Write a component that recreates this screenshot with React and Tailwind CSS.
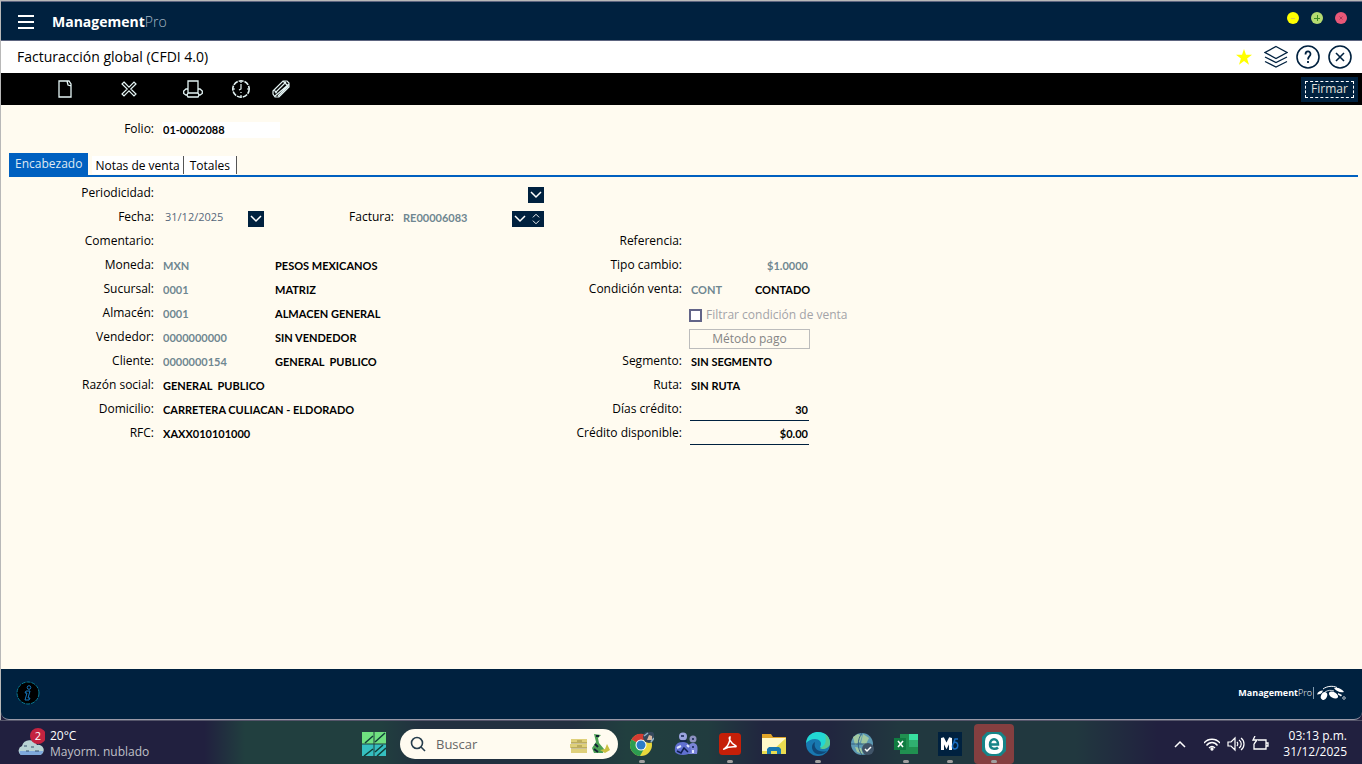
const label = "font-['Open_Sans',sans-serif] text-[12px] leading-4 text-black";
const value = "min-w-0 bg-transparent font-['Lato',sans-serif] text-[11px] font-bold leading-4 text-black outline-none";
const code = "min-w-0 bg-transparent font-['Lato',sans-serif] text-[11px] font-bold leading-4 text-[#6f8791] outline-none";

function Chevron({ up = false, className = "h-2 w-3" }) {
  return (
    <svg viewBox="0 0 12 8" className={className} fill="none" stroke="currentColor" strokeWidth="1.5">
      <path d={up ? "M1 7l5-5 5 5" : "M1 1l5 5 5-5"} />
    </svg>
  );
}

function TitleBar() {
  return (
    <header className="flex h-10 items-center border-b border-t border-[#5d6580] bg-[#00213f] pl-[17px] pr-[15px] pt-0.5 text-white">
      <button aria-label="Menú" className="mr-[18px] h-6 w-4">
        <svg viewBox="0 0 16 24" className="h-6 w-4" fill="none" stroke="white" strokeWidth="2">
          <path d="M0 6h16M0 12h16M0 18h16" />
        </svg>
      </button>
      <h1 className="font-['Open_Sans',sans-serif] text-[14px] font-bold leading-5 text-white">
        Management<span className="font-light text-[#a7b8c4]">Pro</span>
      </h1>
      <div className="ml-auto flex gap-3 pb-2">
        <button aria-label="Minimizar" className="h-3 w-3 rounded-full bg-[#ffff00]">
          <svg viewBox="0 0 12 12" stroke="#e0c850"><path d="M4 6.500h4" /></svg>
        </button>
        <button aria-label="Maximizar" className="h-3 w-3 rounded-full bg-[#b5db70]">
          <svg viewBox="0 0 12 12" stroke="#3f8a20"><path d="M3 6.500h6M6.500 3v6" /></svg>
        </button>
        <button aria-label="Cerrar" className="h-3 w-3 rounded-full bg-[#e85878]">
          <svg viewBox="0 0 12 12" stroke="#a83858"><path d="M4.500 4.500l3 3M7.500 4.500l-3 3" /></svg>
        </button>
      </div>
    </header>
  );
}

function PageBar() {
  return (
    <div className="flex h-8 items-center bg-white pl-4 pr-[10px] text-[#00213f]">
      <h2 className="font-['Open_Sans',sans-serif] text-[14px] leading-5 text-black">Facturacción global (CFDI 4.0)</h2>
      <div className="ml-auto flex items-center gap-2">
        <button aria-label="Favorito" className="mr-1 h-4 w-4">
          <svg viewBox="0 0 16 16" fill="#ffff00"><path d="M8 0l2 5.800h6l-4.900 3.700 1.900 6.200L8 12l-5 3.700 1.900-6.200L0 5.800h6z" /></svg>
        </button>
        <button aria-label="Ventanas" className="h-6 w-6">
          <svg viewBox="0 0 24 24" fill="none" stroke="currentColor" strokeWidth="1.300">
            <path d="M12 1.500l11 6-11 6-11-6zM1 12l11 5.500L23 12M1 16.500L12 22l11-5.500" />
          </svg>
        </button>
        <button aria-label="Ayuda" className="h-6 w-6">
          <svg viewBox="0 0 24 24" fill="none" stroke="currentColor" strokeWidth="1.600">
            <circle cx="12" cy="12" r="11" />
            <path d="M9.500 9.500c0-4 5-4 5-.5 0 2.500-2.500 2.500-2.500 5.500M12 16v2" strokeWidth="1.800" />
          </svg>
        </button>
        <button aria-label="Cerrar ventana" className="h-6 w-6">
          <svg viewBox="0 0 24 24" fill="none" stroke="currentColor" strokeWidth="1.600">
            <circle cx="12" cy="12" r="11" />
            <path d="M8 8l8 8M16 8l-8 8" />
          </svg>
        </button>
      </div>
    </div>
  );
}

function Toolbar() {
  const tool = "h-5 w-5 text-[#e4f4f4]";
  return (
    <div role="toolbar" className="flex h-8 items-center bg-black pl-[54px]">
      <button aria-label="Nuevo" className={tool}>
        <svg viewBox="0 0 20 20" fill="none" stroke="currentColor" strokeWidth="1.300">
          <path d="M12 2H4v16h12V7M12 2l1 4 3 1M12 2l2 0 2 3v2" />
        </svg>
      </button>
      <button aria-label="Cancelar" className={"ml-11 " + tool}>
        <svg viewBox="0 0 20 20" fill="none" stroke="currentColor" strokeWidth="1.200">
          <path d="M5 3l5 5.200L15 3l2 2-5.200 5 5.200 5-2 2-5-5.200L5 17l-2-2 5.200-5L3 5z" />
        </svg>
      </button>
      <button aria-label="Imprimir" className={"ml-11 " + tool}>
        <svg viewBox="0 0 20 20" fill="none" stroke="currentColor" strokeWidth="1.300">
          <path d="M5 14V2h10v12M5 10H3l-2.300 2v2.500L3 16h1M15 10h2l2.300 2v2.500L17 16h-1M5 14l-1 2 1 2h10l1-2-1-2z" />
        </svg>
      </button>
      <button aria-label="Historial" className={"ml-7 " + tool}>
        <svg viewBox="0 0 20 20" fill="none" stroke="currentColor" strokeWidth="1.600">
          <circle cx="10" cy="10" r="8.200" strokeDasharray="5 1" />
          <path d="M10 5v5l-2 1M10 13v1M10 2v2M10 16v2M2 10h2M16 10h2" strokeWidth="1.200" />
        </svg>
      </button>
      <button aria-label="Adjuntar" className={"ml-5 " + tool}>
        <svg viewBox="0 0 20 20" fill="none" stroke="currentColor" strokeWidth="1.200">
          <path d="M2 12L12 2h4l2 2v4L8 18H4l-2-3zM4 14L15 3M4 17L18 5M7 17L17 7M3 11l3 3M12 2l5 5" />
        </svg>
      </button>
      <div className="ml-auto mr-1 h-[25px] bg-[#00213f] p-1">
        <button className="flex h-[17px] w-[49px] items-center justify-center border border-dashed border-white font-['Open_Sans',sans-serif] text-[12px] leading-4 text-[#e0e0dc]">
          Firmar
        </button>
      </div>
    </div>
  );
}

function Row({ id, text, children }) {
  return (
    <div className="flex h-6 gap-2">
      <label htmlFor={id} className={"w-[154px] shrink-0 pr-px pt-1 text-right " + label}>{text}</label>
      <div className="flex min-w-0 flex-1 items-start pt-[5px]">{children}</div>
    </div>
  );
}

function CodeRow({ id, text, codeValue, description }) {
  return (
    <Row id={id} text={text}>
      <input id={id} defaultValue={codeValue} className={"w-28 " + code} />
      <output htmlFor={id} className={"whitespace-pre " + value}>{description}</output>
    </Row>
  );
}

function RightRow({ id, text, children }) {
  return (
    <div className="flex h-6 gap-2">
      <label htmlFor={id} className={"w-[138px] shrink-0 pt-1 text-right " + label}>{text}</label>
      <div className="flex min-w-0 flex-1 items-start pt-[5px]">{children}</div>
    </div>
  );
}

const dark = "mt-px flex h-4 w-4 items-center justify-center bg-[#00213f] text-white";
const amount = "h-[19px] w-[119px] border-b border-[#00213f] pb-[3px] pr-px text-right " + value;

function Form() {
  return (
    <div className="flex items-start pt-1">
      <section className="w-[543px] shrink-0">
        <Row id="periodicidad" text="Periodicidad:">
          <div className="relative flex-1">
            <select id="periodicidad" className="block h-4 w-full appearance-none bg-transparent pr-5 text-[11px]">
              <option></option>
            </select>
            <span className={"pointer-events-none absolute right-0 top-0 " + dark}><Chevron /></span>
          </div>
        </Row>
        <Row id="fecha" text="Fecha:">
          <input id="fecha" defaultValue="31/12/2025" className="-mt-px w-[85px] bg-transparent pl-0.5 font-['Open_Sans',sans-serif] text-[11px] leading-4 text-[#56677a] outline-none" />
          <button aria-label="Elegir fecha" className={dark}><Chevron /></button>
          <label htmlFor="factura" className={"-mt-px w-[130px] text-right " + label}>Factura:</label>
          <input id="factura" defaultValue="RE00006083" className={"ml-2 flex-1 pl-px " + code} />
          <button aria-label="Elegir factura" className={dark}><Chevron /></button>
          <div className="mt-px flex h-4 w-4 flex-col items-center justify-center gap-0.5 bg-[#00213f] text-white">
            <button aria-label="Factura siguiente"><Chevron up className="h-[5px] w-2" /></button>
            <button aria-label="Factura anterior"><Chevron className="h-[5px] w-2" /></button>
          </div>
        </Row>
        <Row id="comentario" text="Comentario:">
          <input id="comentario" className={"flex-1 " + value} />
        </Row>
        <CodeRow id="moneda" text="Moneda:" codeValue="MXN" description="PESOS MEXICANOS" />
        <CodeRow id="sucursal" text="Sucursal:" codeValue="0001" description="MATRIZ" />
        <CodeRow id="almacen" text="Almacén:" codeValue="0001" description="ALMACEN GENERAL" />
        <CodeRow id="vendedor" text="Vendedor:" codeValue="0000000000" description="SIN VENDEDOR" />
        <CodeRow id="cliente" text="Cliente:" codeValue="0000000154" description="GENERAL  PUBLICO" />
        <Row id="razon" text="Razón social:">
          <input id="razon" defaultValue="GENERAL  PUBLICO" className={"flex-1 " + value} />
        </Row>
        <Row id="domicilio" text="Domicilio:">
          <input id="domicilio" defaultValue="CARRETERA CULIACAN - ELDORADO" className={"flex-1 " + value} />
        </Row>
        <Row id="rfc" text="RFC:">
          <input id="rfc" defaultValue="XAXX010101000" className={"flex-1 " + value} />
        </Row>
      </section>
      <section className="min-w-[320px] flex-1 pt-12">
        <RightRow id="referencia" text="Referencia:">
          <input id="referencia" className={"w-[119px] " + value} />
        </RightRow>
        <RightRow id="tipo" text="Tipo cambio:">
          <input id="tipo" defaultValue="$1.0000" className={"w-[119px] pr-px text-right " + code} />
        </RightRow>
        <RightRow id="condicion" text="Condición venta:">
          <input id="condicion" defaultValue="CONT" className={"w-[65px] pl-px " + code} />
          <output htmlFor="condicion" className={value}>CONTADO</output>
        </RightRow>
        <div className="flex h-6 items-center pl-[145px] pt-1">
          <input id="filtrar" type="checkbox" className="h-[13px] w-[13px] appearance-none border-2 border-[#626488] bg-white" />
          <label htmlFor="filtrar" className="pl-1 font-['Open_Sans',sans-serif] text-[12px] leading-4 text-[#a3a3a8]">Filtrar condición de venta</label>
        </div>
        <div className="h-6 pl-[145px] pt-1">
          <button className="flex h-5 w-[121px] items-center justify-center border border-[#bcbcbc] font-['Open_Sans',sans-serif] text-[12px] leading-4 text-[#858585]">Método pago</button>
        </div>
        <RightRow id="segmento" text="Segmento:">
          <output id="segmento" className={"pl-px " + value}>SIN SEGMENTO</output>
        </RightRow>
        <RightRow id="ruta" text="Ruta:">
          <output id="ruta" className={"pl-px " + value}>SIN RUTA</output>
        </RightRow>
        <RightRow id="dias" text="Días crédito:">
          <input id="dias" defaultValue="30" className={amount} />
        </RightRow>
        <RightRow id="credito" text="Crédito disponible:">
          <input id="credito" defaultValue="$0.00" className={amount} />
        </RightRow>
      </section>
    </div>
  );
}

function Main() {
  const tab = "h-[18px] border-r border-[#555] bg-white pt-0.5 font-['Open_Sans',sans-serif] text-[12px] leading-4 text-black";
  return (
    <main className="flex-1 bg-[#fffbf0]">
      <div className="flex gap-2 pt-4">
        <label htmlFor="folio" className={"w-[153px] text-right " + label}>Folio:</label>
        <input id="folio" defaultValue="01-0002088" className="mt-px h-4 w-[118px] bg-white pl-px font-['Lato',sans-serif] text-[11px] font-bold leading-4 text-black outline-none" />
      </div>
      <div role="tablist" className="ml-2 mr-1 mt-[15px] flex h-6 items-end border-b-2 border-[#0060c0]">
        <button role="tab" aria-selected="true" className="mr-1 h-[22px] bg-[#0060c0] px-1.5 font-['Open_Sans',sans-serif] text-[12px] leading-4 text-[#dfe9f3]">Encabezado</button>
        <button role="tab" aria-selected="false" className={"mb-px px-[3px] " + tab}>Notas de venta</button>
        <button role="tab" aria-selected="false" className={"mb-px px-1.5 " + tab}>Totales</button>
      </div>
      <Form />
    </main>
  );
}

function Footer() {
  return (
    <footer className="flex h-[51px] items-center rounded-b-lg border-b border-[#9a9aa8] bg-[#00213f] pb-0.5 pl-[15px] pr-4">
      <button aria-label="Información" className="h-6 w-6">
        <svg viewBox="0 0 24 24">
          <circle cx="12" cy="12" r="11" fill="#000" stroke="#087a94" strokeDasharray="4 1" />
          <circle cx="13" cy="6.500" r="1.800" fill="none" stroke="#1678c0" />
          <path d="M10 10h4l-2 7h2l-1 2h-4l2-7H9z" fill="none" stroke="#1678c0" />
        </svg>
      </button>
      <div className="ml-auto flex items-center gap-0.5">
        <p className="border-r border-[#7f9ab0] pr-px font-['Open_Sans',sans-serif] text-[9px] font-bold leading-3 text-white">
          Management<span className="font-light">Pro</span>
        </p>
        <svg viewBox="0 0 30 16" className="h-4 w-[30px]" fill="white">
          <path d="M1 9.500c1-3 3-4 6-4-1 3-3 4-6 4z" />
          <path d="M7 4c4-3 10-3.500 14-1.500" fill="none" stroke="white" />
          <path d="M9 7c3-2 6-2 9-1" fill="none" stroke="white" strokeWidth=".8" />
          <path d="M18 3c4-1 8 1 10 4-4 1-8-1-10-4z" />
          <ellipse cx="8" cy="11" rx="3" ry="4" transform="rotate(25 8 11)" />
          <ellipse cx="17.500" cy="10" rx="5" ry="3" transform="rotate(30 17.500 10)" />
          <path d="M22 8l4 2-1 1.500-3-2z" />
          <circle cx="28" cy="13" r="1.300" fill="none" stroke="white" strokeWidth=".7" />
        </svg>
      </div>
    </footer>
  );
}

function AppIcon({ name, active = false, running = true, children }) {
  return (
    <button aria-label={name} className={"flex h-10 w-10 flex-col items-center rounded pt-2 " + (active ? "bg-[#843f40]" : "")}>
      <svg viewBox="0 0 24 24" className="h-6 w-6 shrink-0">{children}</svg>
      <span className={"mt-1 h-[3px] w-1.5 shrink-0 rounded-full " + (running ? "bg-[#a0a0a0]" : "")} />
    </button>
  );
}

function Taskbar() {
  return (
    <nav aria-label="Barra de tareas" className="flex h-11 items-center border-t border-[#55556a] bg-[linear-gradient(90deg,#21203f_15%,#213f3f_18%,#213f3f_28%,#21303f_31%,#21303f_42%,#213f3f_46%,#213c3f_52%,#21263f_56%,#21263f_61%,#21383f_66%,#21383f_79%,#21203f_85%)] pt-0.5 text-white">
      <div className="flex flex-1 items-center pl-[17px]">
        <svg viewBox="0 0 28 32" className="h-8 w-7">
          <path d="M4 27a5 5 0 0 1 1-9 8 8 0 0 1 15-1 5 5 0 0 1 3 10z" fill="#b9d4d4" />
          <path d="M4 27a3 3 0 0 1-1-4h23a4 4 0 0 1-3 4z" fill="#7fa9dc" />
          <path d="M7 18h3M14 19h3M9 23h3M18 23h4" stroke="#34506a" />
          <circle cx="21" cy="8" r="8" fill="#c42340" />
          <text x="21" y="12" textAnchor="middle" fill="white" fontSize="11" fontFamily="Open Sans, sans-serif">2</text>
        </svg>
        <p className="pl-[5px] font-['Open_Sans',sans-serif] text-[12px] leading-4 text-white">
          20°C<br /><span className="text-[#c0c0c8]">Mayorm. nublado</span>
        </p>
      </div>
      <div className="ml-3 flex shrink-0 items-center gap-1">
        <button aria-label="Inicio" className="mr-2.5 h-6 w-6">
          <svg viewBox="0 0 24 24">
            <path d="M0 0h11.500v11.500H0zM12.500 0H24v11.500H12.500z" fill="#6fe080" />
            <path d="M0 12.500h11.500V24H0zM12.500 12.500H24V24H12.500z" fill="#35bfc0" />
            <path d="M3 11L11 4M13 10L23 1M13 20l8-7M15 24l9-8M2 24l9-7" stroke="#104038" strokeWidth="1.500" />
          </svg>
        </button>
        <label className="flex h-[30px] w-[218px] items-center rounded-full bg-[#fffbf0] pl-2.5 pr-2">
          <svg viewBox="0 0 16 16" className="h-4 w-4" fill="none" stroke="#263d4c" strokeWidth="1.600">
            <circle cx="7" cy="7" r="5.500" /><path d="M11 11l4 4" />
          </svg>
          <input aria-label="Buscar" placeholder="Buscar" className="min-w-0 flex-1 bg-transparent pl-2.5 font-['Open_Sans',sans-serif] text-[13px] leading-5 outline-none placeholder:text-[#666]" />
          <svg viewBox="0 0 40 22" className="h-[22px] w-10">
            <path d="M1 6h16v4H1zM0 11h17v4H0zM1 16h16v4H1z" fill="#dfd07a" />
            <path d="M1 10h16M1 15h16M7 8h5M7 13h5" stroke="#9a8a40" />
            <path d="M24 1l7 1-3 3 1 5 5 6-1 4H24l-2-5 4-6z" fill="#4ca054" />
            <path d="M26 3h3M25 11l3 3M24 16l4 3" stroke="#123" strokeWidth="2" />
            <path d="M30 17l5-1 2-5 3 6-5 3z" fill="#c9c040" />
          </svg>
        </label>
        <AppIcon name="Chrome">
          <circle cx="11" cy="13" r="11" fill="#e8d83c" />
          <path d="M11 13L1.500 7.500A11 11 0 0 1 21 8H11z" fill="#d43c32" />
          <path d="M11 13L1.500 7.500A11 11 0 0 0 10 24l5-9z" fill="#2c9c50" />
          <circle cx="11" cy="13" r="5.500" fill="white" /><circle cx="11" cy="13" r="4.500" fill="#2a7cc8" />
          <circle cx="19" cy="5" r="6" fill="#34485c" />
          <path d="M17 8l2-5 3 1v4z" fill="#d8b8a0" /><path d="M14 4l4-3M21 10l3-4" stroke="#8fb4c8" strokeWidth="1.500" />
        </AppIcon>
        <AppIcon name="Usuarios" running={false}>
          <circle cx="9" cy="4.500" r="4" fill="#9aa4e0" /><circle cx="19" cy="7" r="3.500" fill="#8c90c0" />
          <path d="M14 22c-1-6 0-11 5-11s5 5 4 11z" fill="#7a84d8" />
          <path d="M1 20c-1-7 2-10 8-10 5 0 8 4 8 10-3 4-13 4-16 0z" fill="#6070d0" />
          <path d="M3 19l4 2 3-5 4 4M7 4h3M18 7h2M18 15h2M6 9h7" stroke="#102050" strokeWidth="1.500" fill="none" />
          <path d="M3 16l4-2M13 13l2 2M19 18v3" stroke="#dfe6ff" strokeWidth="2" />
        </AppIcon>
        <AppIcon name="Acrobat">
          <rect x="1" y="1" width="22" height="22" rx="3.500" fill="#c51f08" />
          <path d="M12 5c-2 0 0 6 6 9 1 2-5-1-12 3-2 1 6-2 6-12z" fill="none" stroke="white" strokeWidth="1.500" />
        </AppIcon>
        <AppIcon name="Explorador" running={false}>
          <path d="M0 2h9l2 3h13v17H0z" fill="#e0a428" /><path d="M0 6h24v16H0z" fill="#eadc50" />
          <path d="M0 6h24L10 19H0z" fill="#fff9c8" /><path d="M5 22v-5l2-2h10l2 2v5h-4v-3H9v3z" fill="#1878b0" />
        </AppIcon>
        <AppIcon name="Edge">
          <circle cx="12" cy="12" r="12" fill="#1878b0" />
          <path d="M0 11C1 2 8 0 12 0c8 0 12 5 12 11-1 5-8 6-10 4 3-5-1-8-5-8S2 9 0 11z" fill="#22d8d4" />
          <path d="M19 2c4 3 5 6 5 10-1 5-8 6-10 4 5-2 7-6 5-14z" fill="#58c890" />
          <path d="M9 10c-2 7 4 11 12 9-4 4-9 4-12 2-4-3-4-9 0-11z" fill="#104878" />
        </AppIcon>
        <AppIcon name="Red" running={false}>
          <circle cx="12" cy="12" r="11" fill="#5d9ab4" />
          <path d="M3 5l5-3 4 2-2 6-5 3zM13 2l6 4-4 8-4-3zM5 15l6 1 2 6-6-2z" fill="#a0c8a0" />
          <path d="M1 12h15M12 1c-5 7-5 15 0 22" stroke="#356080" fill="none" />
          <circle cx="18" cy="17" r="6" fill="#405468" /><path d="M15 17l2 2 4-4" stroke="white" strokeWidth="1.500" fill="none" />
        </AppIcon>
        <AppIcon name="Excel">
          <path d="M6 2h18v20H6z" fill="#209050" /><path d="M15 2h9v6h-9z" fill="#38e0a0" /><path d="M15 8h9v7h-9z" fill="#30b070" />
          <path d="M0 6h12v12H0z" fill="#107c41" /><path d="M4 9l5 6M9 9l-5 6" stroke="white" strokeWidth="1.600" />
        </AppIcon>
        <AppIcon name="ManagementPro">
          <path d="M0 0h24v24H0z" fill="#00213f" />
          <path d="M4.500 18V6l4 8 4-8v12" stroke="white" strokeWidth="3" fill="none" />
          <path d="M20 7h-3l-1 3c5 0 5 7 0 7-3-2-1-6 1-7" stroke="#186cc0" strokeWidth="1.500" fill="none" />
        </AppIcon>
        <AppIcon name="eFactura" active>
          <path d="M5 0h14l5 5v14l-5 5H5l-5-5V5z" fill="#168488" />
          <rect x="3" y="2" width="18" height="20" rx="7" fill="white" />
          <path d="M8 12.500h8c0-7-8-7-8 0 0 5 6 5 8 3" stroke="#168488" strokeWidth="2.500" fill="none" />
        </AppIcon>
      </div>
      <div className="flex flex-1 items-center justify-end pr-[15px]">
        <button aria-label="Mostrar iconos ocultos" className="mr-[18px]"><Chevron up className="h-2 w-3" /></button>
        <svg viewBox="0 0 16 16" className="h-4 w-4" fill="none" stroke="white" strokeWidth="1.300">
          <path d="M0 7c4-5 12-5 16 0M2.500 9.500c3-4 8-4 11 0M5 12c2-2 4-2 6 0" /><circle cx="8" cy="13" r="1" fill="white" />
        </svg>
        <svg viewBox="0 0 18 16" className="ml-[7px] h-4 w-[18px]" fill="none" stroke="white" strokeWidth="1.200">
          <path d="M1 6h3l4-4v12l-4-4H1zM10 6c1 1 1 3 0 4M12 4c3 2 3 6 0 8M14 2c4 3 4 9 0 12" />
        </svg>
        <svg viewBox="0 0 18 16" className="ml-1.5 h-4 w-[18px]" fill="none" stroke="white" strokeWidth="1.300">
          <path d="M7 4h8v9H3V8M15 7h2v3h-2M4 0L2 4h4L3 8" />
        </svg>
        <p className="w-[78px] text-right font-['Open_Sans',sans-serif] text-[12px] leading-4 text-white">03:13 p.m.<br />31/12/2025</p>
      </div>
    </nav>
  );
}

export default function App() {
  return (
    <div className="flex min-h-screen flex-col bg-[#20203f]">
      <div className="flex flex-1 flex-col border-l border-t border-[#b8b8b8]">
        <TitleBar />
        <PageBar />
        <Toolbar />
        <Main />
        <Footer />
      </div>
      <Taskbar />
    </div>
  );
}
